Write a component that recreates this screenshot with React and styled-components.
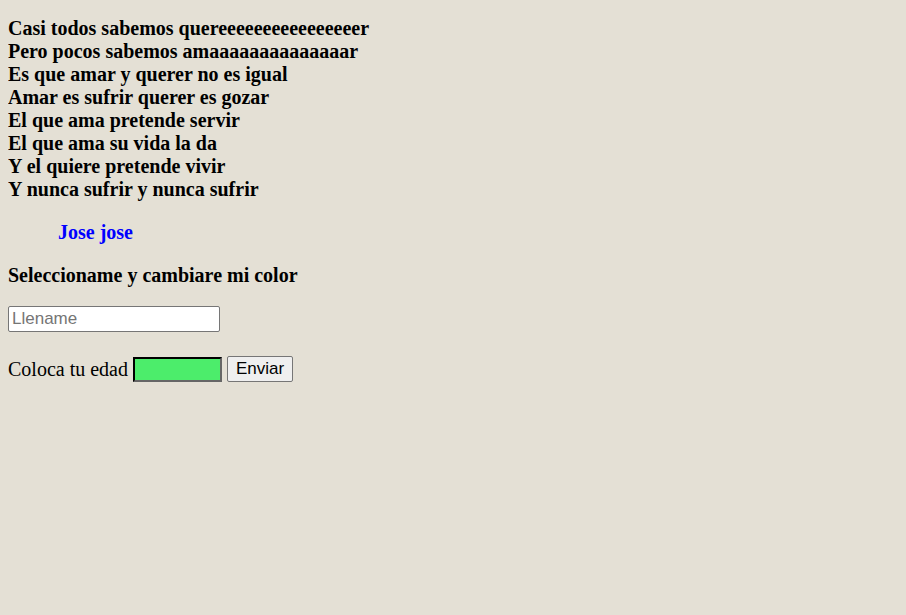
import styled, { createGlobalStyle } from "styled-components";

const GlobalStyle = createGlobalStyle`
  body {
    margin: 8px;
    background-color: #e4e0d5;
    font-family: "Liberation Serif", "Times New Roman", serif;
    color: #000;
  }
`;

const versos = [
  "Casi todos sabemos quereeeeeeeeeeeeeeeer",
  "Pero pocos sabemos amaaaaaaaaaaaaaar",
  "Es que amar y querer no es igual",
  "Amar es sufrir querer es gozar",
  "El que ama pretende servir",
  "El que ama su vida la da",
  "Y el quiere pretende vivir",
  "Y nunca sufrir y nunca sufrir",
];

const App = () => {
  return (
    <Page>
      <GlobalStyle />
      <Poem>
        {versos.map((v) => (
          <span key={v}>{v}</span>
        ))}
      </Poem>
      <Author>Jose jose</Author>
      <Heading $tight>Seleccioname y cambiare mi color</Heading>
      <TextInput type="text" placeholder="Llename" />
      <AgeForm onSubmit={(e) => e.preventDefault()}>
        <label htmlFor="edad">Coloca tu edad</label>
        <AgeInput id="edad" type="text" />
        <SendButton type="submit">Enviar</SendButton>
      </AgeForm>
    </Page>
  );
};

export default App;

const Page = styled.div`
  display: flex;
  flex-direction: column;
  align-items: flex-start;
  padding-top: 9px;
`;

const Heading = styled.h3`
  font-size: 20px;
  line-height: 23px;
  font-weight: bold;
  margin: 0 0 ${({ $tight }) => ($tight ? "19px" : "20px")};
`;

const Poem = styled(Heading)`
  display: flex;
  flex-direction: column;
`;

const Author = styled(Heading)`
  color: #0000ff;
  padding-left: 50px;
`;

const TextInput = styled.input`
  box-sizing: border-box;
  width: 212px;
  height: 26px;
  margin: 0;
  padding: 1px 3px;
  font-family: "Liberation Sans", Arial, sans-serif;
  font-size: 17px;
  background: #fff;
  border: 1px solid #767676;
  border-radius: 2px;

  &::placeholder {
    color: #757575;
  }
`;

const AgeForm = styled.form`
  display: flex;
  align-items: center;
  gap: 5px;
  margin-top: 24px;
  font-size: 20px;
`;

const AgeInput = styled.input`
  box-sizing: border-box;
  width: 89px;
  height: 25px;
  margin: 0;
  background-color: #4ced6b;
  border: 2px inset #333;
  border-color: #333 #666 #666 #333;
`;

const SendButton = styled.button`
  box-sizing: border-box;
  width: 66px;
  height: 26px;
  font-family: "Liberation Sans", Arial, sans-serif;
  font-size: 17px;
  color: #000;
  background: #efefef;
  border: 1px solid #767676;
  border-radius: 2px;
  padding: 0;
`;
